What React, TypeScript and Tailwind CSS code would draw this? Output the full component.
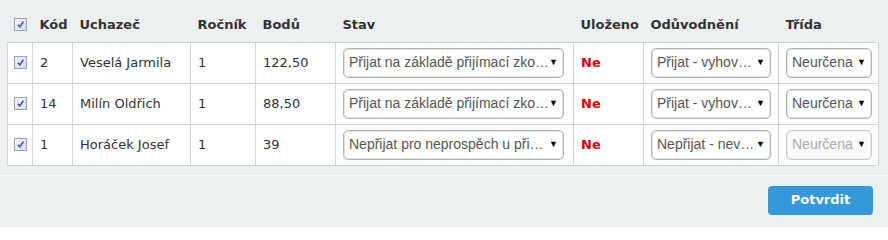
import React from "react";

type Row = {
  kod: string;
  name: string;
  rocnik: string;
  body: string;
  stav: string;
  duvod: string;
  disabledTrida?: boolean;
};

const rows: Row[] = [
  { kod: "2", name: "Veselá Jarmila", rocnik: "1", body: "122,50", stav: "Přijat na základě přijímací zko…", duvod: "Přijat - vyhov…" },
  { kod: "14", name: "Milín Oldřich", rocnik: "1", body: "88,50", stav: "Přijat na základě přijímací zko…", duvod: "Přijat - vyhov…" },
  { kod: "1", name: "Horáček Josef", rocnik: "1", body: "39", stav: "Nepřijat pro neprospěch u při…", duvod: "Nepřijat - nev…", disabledTrida: true },
];

function Check() {
  return (
    <span className="inline-flex h-[13px] w-[13px] items-center justify-center border border-[#9aa3b5] bg-gradient-to-br from-[#f2f4f8] to-[#d6dce8]">
      <svg viewBox="0 0 10 10" className="h-[9px] w-[9px]">
        <path d="M2 5.3 L4.2 7.6 L8.2 2" fill="none" stroke="#3553a6" strokeWidth="1.7" />
      </svg>
    </span>
  );
}

function Select({ text, width, disabled }: { text: string; width: string; disabled?: boolean }) {
  return (
    <div
      className={`flex h-[30px] items-center rounded-[5px] border pl-[5px] pr-[5px] ${width} ${
        disabled
          ? "border-[#c9c9c9] bg-[#fafafa] text-[#aaa] shadow-[inset_0_0_0_1px_#ececec]"
          : "border-[#b4b4b4] bg-white text-[#555] shadow-[inset_0_0_0_1px_#e2e2e2]"
      }`}
      style={{ fontFamily: '"Liberation Sans", Arial, sans-serif' }}
    >
      <span className="min-w-0 flex-1 overflow-hidden whitespace-nowrap text-[14px]">{text}</span>
      <span className="ml-[1px] text-[9px] text-black">▼</span>
    </div>
  );
}

export default function App() {
  const th = "px-[7px] text-left align-middle text-[13px] font-bold text-[#333]";
  const td = "border border-[#d4d4d4] px-[7px] align-middle";

  return (
    <div
      className="h-[227px] w-[888px] bg-[#ecf0f1] text-[#333]"
      style={{ fontFamily: '"DejaVu Sans", Verdana, sans-serif' }}
    >
      <div className="pl-[7px] pr-[10px] pt-[8px]">
        <table className="w-[871px] table-fixed border-collapse text-[13px]">
          <colgroup>
            <col className="w-[25px]" />
            <col className="w-[40px]" />
            <col className="w-[118px]" />
            <col className="w-[65px]" />
            <col className="w-[80px]" />
            <col className="w-[238px]" />
            <col className="w-[70px]" />
            <col className="w-[135px]" />
            <col className="w-[100px]" />
          </colgroup>
          <thead>
            <tr className="h-[34px]">
              <th className="pl-[6px] text-left align-middle">
                <Check />
              </th>
              <th className={th}>Kód</th>
              <th className={th}>Uchazeč</th>
              <th className={th}>Ročník</th>
              <th className={th}>Bodů</th>
              <th className={th}>Stav</th>
              <th className={th}>Uloženo</th>
              <th className={th}>Odůvodnění</th>
              <th className={th}>Třída</th>
            </tr>
          </thead>
          <tbody className="border border-[#c2c2c2] bg-white">
            {rows.map((r) => (
              <tr key={r.kod} className="h-[41px]">
                <td className={`${td} pl-[6px]`}>
                  <Check />
                </td>
                <td className={td}>{r.kod}</td>
                <td className={td}>{r.name}</td>
                <td className={td}>{r.rocnik}</td>
                <td className={td}>{r.body}</td>
                <td className={`${td} px-[6px]`}>
                  <Select text={r.stav} width="w-[221px]" />
                </td>
                <td className={`${td} font-bold text-[#e00000]`}>Ne</td>
                <td className={`${td} px-[6px]`}>
                  <Select text={r.duvod} width="w-[120px]" />
                </td>
                <td className={`${td} px-[6px]`}>
                  <Select text="Neurčena" width="w-[86px]" disabled={r.disabledTrida} />
                </td>
              </tr>
            ))}
          </tbody>
        </table>
      </div>
      <div className="mt-[9px] flex justify-end border-t border-[#fafbfb] pr-[15px] pt-[10px]">
        <button className="h-[29px] w-[105px] rounded-[4px] bg-[#3498db] text-[13px] font-bold text-white">
          Potvrdit
        </button>
      </div>
    </div>
  );
}
